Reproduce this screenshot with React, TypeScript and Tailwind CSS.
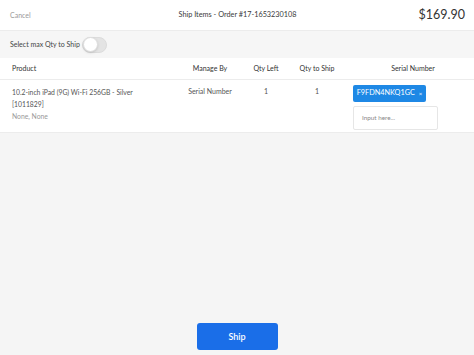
export default function App() {
  return (
    <div className="flex h-[355px] w-[474px] flex-col bg-white font-['Lato','Noto_Sans',sans-serif] text-[#444]">
      <div className="flex h-[31px] items-center justify-between border-b border-[#ececec] pl-[10px] pr-[9px]">
        <span className="w-[80px] text-[7px] text-[#9a9a9a]">Cancel</span>
        <span className="text-[7.3px] text-[#3a3a3a]">Ship Items - Order #17-1653230108</span>
        <span className="w-[80px] text-right text-[12.5px] text-[#333]">$169.90</span>
      </div>
      <div className="flex h-[27px] items-center gap-[2px] bg-[#f6f6f6] pl-[10px]">
        <span className="text-[7px] text-[#444]">Select max Qty to Ship</span>
        <div className="flex h-[16px] w-[25px] items-center rounded-full border border-[#dcdcdc] bg-[#e4e4e4]">
          <div className="h-[15px] w-[15px] rounded-full border border-[#ddd] bg-white shadow-sm" />
        </div>
      </div>
      <div className="grid h-[22px] grid-cols-[170px_80px_32px_70px_1fr] items-center border-b border-[#ececec] text-[7px] text-[#333]">
        <span className="pl-[12px]">Product</span>
        <span className="text-center">Manage By</span>
        <span className="text-center">Qty Left</span>
        <span className="text-center">Qty to Ship</span>
        <span className="text-center">Serial Number</span>
      </div>
      <div className="grid h-[53px] grid-cols-[170px_80px_32px_70px_1fr] border-b border-[#ececec] pt-[6px] text-[6.8px] text-[#555]">
        <div className="flex flex-col pl-[12px] leading-[12px]">
          <span>10.2-inch iPad (9G) Wi-Fi 256GB - Silver</span>
          <span>[1011829]</span>
          <span className="text-[#999]">None, None</span>
        </div>
        <span className="text-center text-[7px]">Serial Number</span>
        <span className="text-center text-[7px]">1</span>
        <span className="text-center text-[7px]">1</span>
        <div className="flex flex-col gap-[4px] pl-[1px]">
          <div className="-mt-[1px] flex h-[17px] w-[73px] items-center justify-center rounded-[2px] bg-[#1e88e5] text-[7.3px] text-white">
            F9FDN4NKQ1GC <span className="ml-[4px] text-[6px]">×</span>
          </div>
          <div className="flex h-[24px] w-[85px] items-center rounded-[2px] border border-[#e6e6e6] bg-white pl-[8px] text-[6.3px] text-[#888]">
            Input here...
          </div>
        </div>
      </div>
      <div className="flex flex-1 items-end justify-center bg-[#f5f5f5] pb-[5px]">
        <button className="h-[27px] w-[81px] rounded-[3px] bg-[#1a6ee8] text-[9px] font-semibold text-white">
          Ship
        </button>
      </div>
    </div>
  )
}
